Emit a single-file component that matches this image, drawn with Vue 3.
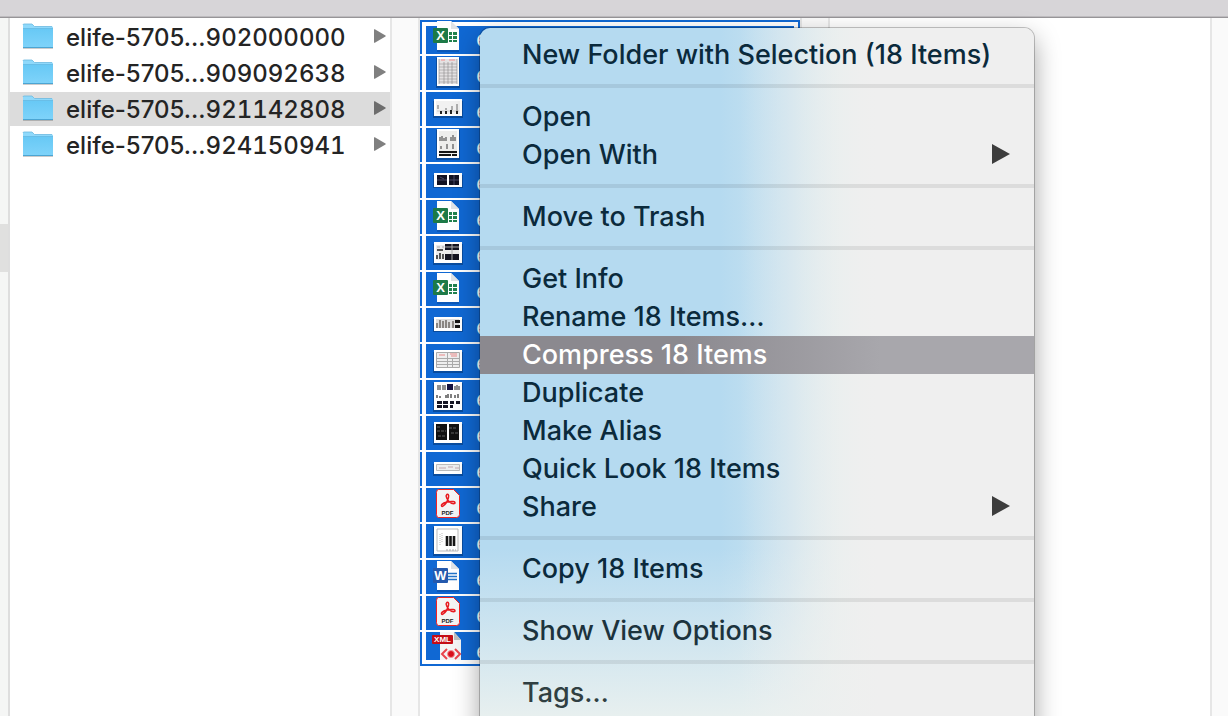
<script setup>
const folders = [
  { prefix: 'elife-5705...', stamp: '902000000' },
  { prefix: 'elife-5705...', stamp: '909092638' },
  { prefix: 'elife-5705...', stamp: '921142808', selected: true },
  { prefix: 'elife-5705...', stamp: '924150941' },
]
const files = [
  'excel', 'sheet', 'chart', 'figure', 'dark', 'excel', 'panels', 'excel', 'bars',
  'table', 'multi', 'blots', 'strip', 'pdf', 'plot', 'word', 'pdf', 'xml',
]
const groups = [
  [{ label: 'New Folder with Selection (18 Items)' }],
  [{ label: 'Open' }, { label: 'Open With', more: true }],
  [{ label: 'Move to Trash' }],
  [
    { label: 'Get Info' },
    { label: 'Rename 18 Items…' },
    { label: 'Compress 18 Items', active: true },
    { label: 'Duplicate' },
    { label: 'Make Alias' },
    { label: 'Quick Look 18 Items' },
    { label: 'Share', more: true },
  ],
  [{ label: 'Copy 18 Items' }],
  [{ label: 'Show View Options' }],
  [{ label: 'Tags…' }],
]
</script>

<template>
  <div class="finder">
    <header class="toolbar"></header>
    <main class="columns">
      <div class="edge"><div class="edge-mark"></div></div>
      <ul class="column">
        <li v-for="f in folders" :key="f.stamp">
          <button class="folder" :class="{ selected: f.selected }">
            <svg class="folder-icon" width="32" height="26" viewBox="0 0 32 26">
              <defs>
                <linearGradient id="fold" x1="0" y1="0" x2="0" y2="1">
                  <stop offset="0" stop-color="#68c9f5" />
                  <stop offset="1" stop-color="#7fd3fa" />
                </linearGradient>
              </defs>
              <path d="M1 25.500h30" stroke="#000" stroke-opacity=".2" />
              <path d="M1 2q0-1 1-1h8l2.500 2.500H30q1 0 1 1V24H1z" fill="#8fd9fb" />
              <path d="M1 2q0-1 1-1h8l2.500 2.500H30" fill="none" stroke="#6bb9df" stroke-width=".8" />
              <path d="M1 6h30v18q0 .8-.8.8H1.800q-.8 0-.8-.8z" fill="url(#fold)" />
              <path d="M1 5.500h30" stroke="#5fb8e2" stroke-width=".8" />
              <path d="M1 24.500h30" stroke="#4ba5d3" />
            </svg>
            <span class="folder-name">{{ f.prefix }}<span class="stamp">{{ f.stamp }}</span></span>
            <svg class="caret" width="12" height="14" viewBox="0 0 12 14"><path d="M0 0.500Q0 0 .8.200L11.500 6.500Q12 7 11.500 7.500L.8 13.800Q0 14 0 13.500z" fill="currentColor" /></svg>
          </button>
        </li>
      </ul>
      <div class="gutter"></div>
      <ul class="column files">
        <li v-for="(kind, i) in files" :key="i" class="file">
          <div class="file-body">
            <svg class="file-icon" width="36" height="34" viewBox="0 0 36 34">
              <g v-if="kind === 'excel' || kind === 'word'">
                <path d="M9 3h14l8 8v21H9z" fill="#0a4fa5" opacity=".6" />
                <path d="M9 1h14l8 8v21H9z" fill="#fff" />
                <path d="M23 1v8h8z" fill="#dfe3e6" />
                <template v-if="kind === 'excel'">
                  <path d="M21 12h3v3h-3zM25 12h4v3h-4zM21 16h3v3h-3zM25 16h4v3h-4zM21 20h3v2h-3zM25 20h4v2h-4z" fill="#21814f" />
                  <rect x="5" y="8" width="15" height="15" rx="1" fill="#1d7a48" />
                </template>
                <template v-else>
                  <path d="M20 13.500h9M20 16.500h9M20 19.500h9" stroke="#2474c8" stroke-width="1.500" />
                  <rect x="5" y="8" width="15" height="15" rx="1" fill="#2459ad" />
                </template>
                <text x="12.500" y="20" text-anchor="middle" class="glyph">{{ kind === 'excel' ? 'X' : 'W' }}</text>
              </g>
              <g v-else-if="kind === 'pdf'">
                <path d="M10.500 1.500h15l6 6v19q0 3-3 3h-18q-2 0-2-3v-22q0-3 2-3z" fill="#f4f4f4" stroke="#f32222" />
                <path d="M18.500 7c1.300-1.600 2.600-.2 2 2.300-.8 3.500-3.200 7.200-5.300 8.700-1.500 1-2.400-.4-1.200-1.600 1.900-1.900 7.300-3.400 11.300-2.900 2.200.3 2.300 2.200.3 2.200-3.300 0-7-4.400-7.400-7.200-.1-.6 0-1.200.3-1.500z" fill="none" stroke="#e8191f" stroke-width="1.500" />
                <text x="19.500" y="27" text-anchor="middle" class="pdf-label">PDF</text>
              </g>
              <g v-else-if="kind === 'xml'">
                <path d="M12 0h14l7 8v20H12z" fill="#f4f4f4" />
                <path d="M26 0v8h7z" fill="#bdbdbd" />
                <path d="M19 17l-5 5 5 5M27 17l5 5-5 5" fill="none" stroke="#e9444c" stroke-width="2" />
                <circle cx="23" cy="22" r="3.500" fill="#d9101c" stroke="#f39096" />
                <rect x="4" y="3" width="21" height="9" rx="1" fill="#c50d16" />
                <text x="14.500" y="10" text-anchor="middle" class="xml-label">XML</text>
              </g>
              <g v-else-if="kind === 'sheet'">
                <path d="M8 2h24v30H8z" fill="#094c9e" /><path d="M9 1h22v29H9z" fill="#fff" />
                <path d="M11 3h18v25H11z" fill="#e4e2e3" />
                <path d="M13 4h4M21 4h6" stroke="#eeaaaa" stroke-width="1.500" />
                <path d="M11 8h18M11 11h18M11 14h18M11 17h18M11 20h18M11 23h18M11 26h18" stroke="#999" stroke-width=".6" />
                <path d="M11 3v25M16 6v22M20 6v22M24 6v22M29 3v25" stroke="#888" stroke-width=".6" />
              </g>
              <g v-else-if="kind === 'figure'">
                <path d="M8 2h24v30H8z" fill="#094c9e" /><path d="M9 1h22v29H9z" fill="#fff" />
                <path d="M11 3h18v25H11z" fill="#eeeeec" />
                <path d="M12 13V9M14 13V8M16 13v-3M18 13v-4M23 13V9M25 13V7M27 13v-4M13 21v-3M19 21v-5M25 21v-5" stroke="#555" stroke-width="1.200" />
                <path d="M11 24h18M11 27h12M24 27h5" stroke="#161616" stroke-width="2" />
              </g>
              <g v-else-if="kind === 'multi' || kind === 'plot'">
                <path d="M5 3h30v29H5z" fill="#094c9e" /><path d="M6 2h28v28H6z" fill="#fff" />
                <template v-if="kind === 'multi'">
                  <path d="M10 10V5M12 10V5M15 10V5M17 10V5M27 10V6M29 10V5M31 10V6" stroke="#222" />
                  <path d="M19 4h6v6h-6z" fill="#16133e" />
                  <path d="M9 18v-3M12 18v-2M18 18v-3M20 18v-4M23 18v-4M27 18v-3M30 18v-4" stroke="#555" stroke-width="1.500" />
                  <path d="M9 21h5v3H9zM15 21h5v3h-5zM22 21h4v3h-4zM28 21h4v3h-4zM9 25h5v3H9zM15 25h5v3h-5zM22 25h3v3h-3z" fill="#161624" />
                </template>
                <template v-else>
                  <path d="M9 5h21v22H9z" fill="#fff" stroke="#bbb" />
                  <path d="M12 10v11M14 9v9" stroke="#bbb" stroke-dasharray="1 1" />
                  <path d="M19 12v10M22.500 12v10M26 12v10" stroke="#161616" stroke-width="2.600" />
                  <path d="M18 26h10" stroke="#aaa" stroke-dasharray="2 1" />
                </template>
              </g>
              <g v-else-if="kind === 'strip'">
                <path d="M5 12h30v12H5z" fill="#094c9e" /><path d="M6 10h28v12H6z" fill="#fff" />
                <path d="M8.500 12.500h23v6h-23z" fill="#eee" stroke="#bbb" />
                <path d="M11 16h7M20 15h5M27 16h4" stroke="#c3a6ae" />
              </g>
              <g v-else-if="kind === 'dark' || kind === 'bars'">
                <path d="M5 11h30v13H5z" fill="#094c9e" /><path d="M6 9h28v14H6z" fill="#fff" />
                <template v-if="kind === 'dark'">
                  <path d="M9 11h10v10H9zM21 11h10v10H21z" fill="#111122" />
                  <path d="M9 16h10M21 16h10M12 13l4 2M26 11v10" stroke="#555575" stroke-width=".8" />
                </template>
                <template v-else>
                  <path d="M8 11h23v9H8z" fill="#ddd" />
                  <path d="M9 20v-5M12 20v-8M15 20v-7M18 20v-8M21 20v-6M25 20v-7" stroke="#8b8783" stroke-width="2" />
                  <path d="M27 12h5v3h-5zM27 17h5v3h-5z" fill="#151515" />
                </template>
              </g>
              <g v-else-if="kind === 'chart'">
                <path d="M5 9h30v17H5z" fill="#094c9e" /><path d="M6 7h28v17H6z" fill="#fff" />
                <path d="M8 9h24v13H8z" fill="#f1f1f1" />
                <path d="M9 19h22" stroke="#ccc" />
                <path d="M13 22v-3M18 22v-3M23 22v-4M29 22v-3" stroke="#222" stroke-width="2" />
                <path d="M10 17v-4M18 18v-2M24 18v-4M29 19v-7" stroke="#999" stroke-width="1.500" />
              </g>
              <g v-else>
                <path d="M5 8h30v21H5z" fill="#094c9e" /><path d="M6 6h28v21H6z" fill="#fff" />
                <template v-if="kind === 'panels'">
                  <path d="M8 9h23v15H8z" fill="#ebebeb" />
                  <path d="M17 8h14v6H17zM17 18h14v6H17z" fill="#141420" />
                  <path d="M9 11h3M14 11h2M17 11h14M24 8v16" stroke="#aaa" />
                  <path d="M9 23v-4M12 23v-6M15 23v-5M9 14h6" stroke="#222" stroke-width="1.500" />
                </template>
                <template v-else-if="kind === 'table'">
                  <path d="M8.500 8.500h23v15h-23z" fill="#eee" stroke="#aaa" />
                  <path d="M11 11h6M22 10h7M23 12h6" stroke="#e98989" />
                  <path d="M9 14.500h22M9 17.500h22M9 20.500h22M19.500 9v14M24.500 14v9" stroke="#aaa" />
                </template>
                <template v-else>
                  <path d="M8 8h11v16H8zM21 8h10v16H21z" fill="#111" />
                  <path d="M9 11h3M9 15h9M17 20h-8M21 12h8M23 17h8" stroke="#777" stroke-width=".8" stroke-dasharray="3 1" />
                </template>
              </g>
            </svg>
            <span class="file-name">elife</span>
          </div>
        </li>
      </ul>
      <div class="gutter"></div>
      <div class="column"></div>
      <div class="gutter last"></div>
    </main>

    <div class="menu" role="menu">
      <div v-for="(g, gi) in groups" :key="gi" class="group">
        <button v-for="item in g" :key="item.label" class="item" :class="{ active: item.active }" role="menuitem">
          <span>{{ item.label }}</span>
          <svg v-if="item.more" class="more" width="18" height="20" viewBox="0 0 18 20"><path d="M0 0l18 10L0 20z" fill="#3d3d3d" /></svg>
        </button>
      </div>
    </div>
  </div>
</template>

<style>
html, body, #app { height: 100%; }
body { margin: 0; overflow: hidden; }
</style>

<style scoped>
.finder {
  position: relative;
  display: flex;
  flex-direction: column;
  height: 100%;
  overflow: hidden;
  background: #fff;
  color: #242424;
  font-family: Inter, "Liberation Sans", sans-serif;
}
.toolbar {
  box-sizing: border-box;
  flex: 0 0 18px;
  background: #d7d5d8;
  border-bottom: 1px solid #979598;
  box-shadow: inset 0 -1px #bdbbbe;
}
.columns { display: flex; flex: 1; min-height: 0; }
.edge { flex: 0 0 8px; background: #f5f6f5; border-right: 2px solid #dedede; padding-top: 206px; }
.edge-mark { height: 48px; background: #e0e0df; }
.column { flex: 1 1 0; min-width: 0; margin: 0; padding: 2px 0; list-style: none; }
.gutter {
  flex: 0 0 26px;
  background: #fafafa;
  border: solid #e6e6e6;
  border-width: 0 2px;
}
.gutter.last { flex-basis: 16px; border-right: 0; }
.folder {
  display: flex;
  align-items: center;
  width: 100%;
  height: 34px;
  margin: 0 0 2px;
  padding: 0 4px 2px 12px;
  border: 0;
  background: none;
  color: inherit;
  font: 500 24px/30px Inter, "Liberation Sans", sans-serif;
  text-align: left;
}
.folder.selected { background: #dcdcdc; }
.folder-icon { flex: none; margin-right: 12px; }
.folder-name { flex: 1; padding-top: 4px; white-space: nowrap; }
.stamp { font-variant-numeric: tabular-nums; }
.caret { color: #808080; }
.selected .caret { color: #6d6d6d; }
.files { display: flex; flex-direction: column; gap: 2px; }
.file {
  box-sizing: border-box;
  height: 34px;
  padding: 0 4px;
  border: solid #1068d3;
  border-width: 0 2px;
}
.file:first-child { padding-top: 4px; border-top-width: 2px; }
.file:last-child { padding-bottom: 4px; border-bottom-width: 2px; }
.file-body { display: flex; align-items: center; height: 100%; background: #1068d3; }
.file:first-child .file-body { align-items: flex-end; }
.file:last-child .file-body { align-items: flex-start; }
.file-icon { flex: none; margin: 0 12px 0 2px; }
.file-name { padding-top: 4px; color: #fff; font-size: 24px; line-height: 30px; }
.glyph { fill: #fff; font: bold 13px "Liberation Sans", sans-serif; }
.pdf-label { fill: #222; font: bold 6px "Liberation Sans", sans-serif; }
.xml-label { fill: #fff; font: bold 8px "Liberation Sans", sans-serif; }
.menu {
  position: absolute;
  top: 28px;
  left: 480px;
  width: 554px;
  padding: 8px 0 40px;
  border-radius: 10px;
  background:
    linear-gradient(to right, #efefef00 260px, #efefef 400px),
    linear-gradient(to bottom, #ebf1ef00 520px, #ebf1ef 700px),
    linear-gradient(to right, #b5daf0 0, #b5daf0 240px, #cbe3ef 310px, #e2efee 360px, #efefef 400px);
  box-shadow: 0 0 0 1px #00000038, 0 10px 26px #00000060;
  overflow: hidden;
}
.group + .group { margin-top: 10px; padding-top: 10px; border-top: 4px solid #00000014; }
.item {
  display: flex;
  align-items: center;
  justify-content: space-between;
  width: 100%;
  height: 38px;
  padding: 0 24px 0 42px;
  border: 0;
  background: none;
  color: #0b2a3c;
  font: 500 27px/34px Inter, "Liberation Sans", sans-serif;
  text-align: left;
  white-space: nowrap;
}
.more { margin-bottom: 2px; }
.group:nth-last-child(2) .item { color: #1c333d; }
.group:last-child .item { color: #303f42; }
.item.active { background: linear-gradient(to right, #8b898f 0, #8b898f 200px, #a8a7ac 400px); color: #fff; }
</style>
